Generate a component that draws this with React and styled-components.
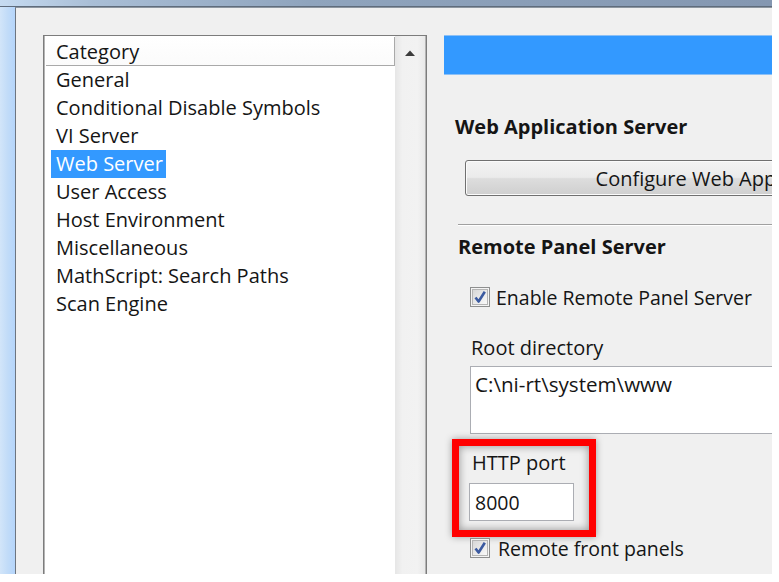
import React from 'react';
import styled, { createGlobalStyle } from 'styled-components';

const GlobalStyle = createGlobalStyle`
    html, body {
        margin: 0;
        padding: 0;
        background: #ffffff;
    }
    body {
        font-family: "Open Sans", "Noto Sans", sans-serif;
        color: #151515;
    }
`;

const Window = styled.div`
    width: 772px;
    height: 574px;
    overflow: hidden;
    display: flex;
    flex-direction: column;
    background: #bdd8f6;
`;

const TitleEdge = styled.div`
    flex: none;
    height: 6px;
    background: linear-gradient(90deg, #c6dbf1 0%, #a9bed6 12%, #8fa4bd 40%, #8497b1 100%);
    border-bottom: 1px solid #5f6c7c;
`;

const Body = styled.div`
    flex: 1;
    display: flex;
    min-height: 0;
`;

const SideFrame = styled.div`
    flex: none;
    width: 15px;
    background: linear-gradient(90deg, #d2e5f9 0%, #c2dcf8 50%, #b5d5fb 100%);
`;

const Client = styled.div`
    flex: 1;
    display: flex;
    align-items: flex-start;
    background: #f0f0f0;
    border-left: 1px solid #6d7580;
    border-top: 1px solid #8d96a0;
    padding: 27px 0 0 27px;
    min-width: 0;
`;

const ListBox = styled.div`
    flex: none;
    width: 380px;
    height: 560px;
    display: flex;
    background: #ffffff;
    border: 1px solid #7c7c7c;
    box-shadow: inset 1px 0 0 #b4b4b4, inset -1px 0 0 #b4b4b4;
    padding: 0 1px;
`;

const List = styled.div`
    flex: 1;
    display: flex;
    flex-direction: column;
`;

const Header = styled.div`
    height: 28px;
    margin: 1px 0 0 1px;
    padding-left: 10px;
    display: flex;
    align-items: center;
    font-size: 20px;
    background: linear-gradient(#ffffff, #fbfbfb);
    border-bottom: 1px solid #a9a9a9;
    border-right: 1px solid #a9a9a9;
`;

const Item = styled.div`
    height: 28px;
    display: flex;
    align-items: center;
    padding-left: 6px;
    font-size: 20px;
`;

const ItemLabel = styled.span`
    line-height: 28px;
    padding: 0 3px 0 5px;
    background: ${props => props.selected ? "#3399ff" : "transparent"};
    color: ${props => props.selected ? "#ffffff" : "inherit"};
`;

const ScrollBar = styled.div`
    flex: none;
    width: 30px;
    background: linear-gradient(90deg, #e6e6e6 0%, #f1f1f1 25%, #f2f2f2 75%, #e9e9e9 100%);
`;

const ScrollButton = styled.div`
    height: 34px;
    display: flex;
    align-items: center;
    justify-content: center;
`;

const RightPanel = styled.div`
    flex: none;
    width: 460px;
    margin-left: 17px;
    display: flex;
    flex-direction: column;
    align-items: flex-start;
`;

const BlueBar = styled.div`
    align-self: stretch;
    height: 38px;
    background: #3399ff;
    border-top: 1px solid #8cc0f6;
    border-bottom: 1px solid #8cc0f6;
`;

const SectionTitle = styled.div`
    font-size: 20px;
    font-weight: 700;
    line-height: 24px;
    margin-top: ${props => props.top}px;
    margin-left: ${props => props.left}px;
`;

const WideButton = styled.div`
    margin-top: 21px;
    margin-left: 21px;
    width: 572px;
    height: 34px;
    display: flex;
    align-items: center;
    justify-content: center;
    font-size: 20px;
    border: 1px solid #707070;
    border-radius: 3px;
    background: linear-gradient(#f3f3f3 0%, #ebebeb 48%, #dddddd 52%, #cfcfcf 100%);
    box-shadow: inset 0 0 0 1px #fbfbfb;
`;

const Separator = styled.div`
    align-self: stretch;
    margin: 28px 0 0 14px;
    height: 1px;
    background: #a0a0a0;
    border-bottom: 1px solid #ffffff;
`;

const CheckRow = styled.div`
    margin-top: ${props => props.top}px;
    margin-left: 26px;
    display: flex;
    align-items: center;
    gap: ${props => props.gap}px;
    font-size: 19.5px;
    height: 20px;
`;

const FieldLabel = styled.div`
    font-size: 20px;
    line-height: 24px;
    margin-top: ${props => props.top}px;
    margin-left: ${props => props.left}px;
`;

const TextArea = styled.div`
    margin-top: 6px;
    margin-left: 26px;
    width: 400px;
    height: 60px;
    padding: 5px 4px 1px;
    font-size: 20.6px;
    line-height: 24px;
    background: #ffffff;
    border: 1px solid #abadb3;
`;

const Highlight = styled.div`
    margin-top: 5px;
    margin-left: 8px;
    width: 130px;
    height: 79px;
    padding-top: 5px;
    border: 7px solid #ff0000;
    box-shadow: 0 0 7px rgba(0, 0, 0, 0.35), inset 0 0 8px rgba(0, 0, 0, 0.4);
`;

const PortInput = styled.div`
    margin: 8px 0 0 10px;
    width: 98px;
    height: 36px;
    padding-left: 5px;
    display: flex;
    align-items: center;
    font-size: 19.5px;
    background: #ffffff;
    border: 1px solid #abadb3;
`;

const categories = [
    "General",
    "Conditional Disable Symbols",
    "VI Server",
    "Web Server",
    "User Access",
    "Host Environment",
    "Miscellaneous",
    "MathScript: Search Paths",
    "Scan Engine",
];

const CheckBox = () => (
    <svg width="20" height="20" viewBox="0 0 20 20">
        <defs>
            <linearGradient id="cbFill" x1="0" y1="0" x2="1" y2="1">
                <stop offset="0" stopColor="#d6d6d6" />
                <stop offset="1" stopColor="#fbfbfb" />
            </linearGradient>
        </defs>
        <rect x="0.5" y="0.5" width="19" height="19" fill="#f4f4f4" stroke="#8e8f8f" />
        <rect x="2.5" y="2.5" width="15" height="15" fill="url(#cbFill)" stroke="#b5b5b5" />
        <path d="M5.5 10.5 L8.6 14.5 L14.8 4.8" fill="none" stroke="#3b5aa0" strokeWidth="2.6" strokeLinejoin="round" />
    </svg>
);

const UpArrow = () => (
    <svg width="10" height="6" viewBox="0 0 10 6">
        <path d="M0 6 L5 0.5 L10 6 Z" fill="#3c3c3c" />
    </svg>
);

const App = () => {
    return (
        <Window>
            <GlobalStyle />
            <TitleEdge />
            <Body>
                <SideFrame />
                <Client>
                    <ListBox>
                        <List>
                            <Header>Category</Header>
                            {categories.map(name => (
                                <Item key={name}>
                                    <ItemLabel selected={name === "Web Server"}>{name}</ItemLabel>
                                </Item>
                            ))}
                        </List>
                        <ScrollBar>
                            <ScrollButton>
                                <UpArrow />
                            </ScrollButton>
                        </ScrollBar>
                    </ListBox>
                    <RightPanel>
                        <BlueBar />
                        <SectionTitle top={40} left={11}>Web Application Server</SectionTitle>
                        <WideButton>Configure Web Application Server</WideButton>
                        <Separator />
                        <SectionTitle top={9} left={14}>Remote Panel Server</SectionTitle>
                        <CheckRow top={28} gap={6}>
                            <CheckBox />
                            Enable Remote Panel Server
                        </CheckRow>
                        <FieldLabel top={29} left={27}>Root directory</FieldLabel>
                        <TextArea>C:\ni-rt\system\www</TextArea>
                        <Highlight>
                            <FieldLabel top={0} left={13}>HTTP port</FieldLabel>
                            <PortInput>8000</PortInput>
                        </Highlight>
                        <CheckRow top={1} gap={8}>
                            <CheckBox />
                            Remote front panels
                        </CheckRow>
                    </RightPanel>
                </Client>
            </Body>
        </Window>
    );
};

export default App;
